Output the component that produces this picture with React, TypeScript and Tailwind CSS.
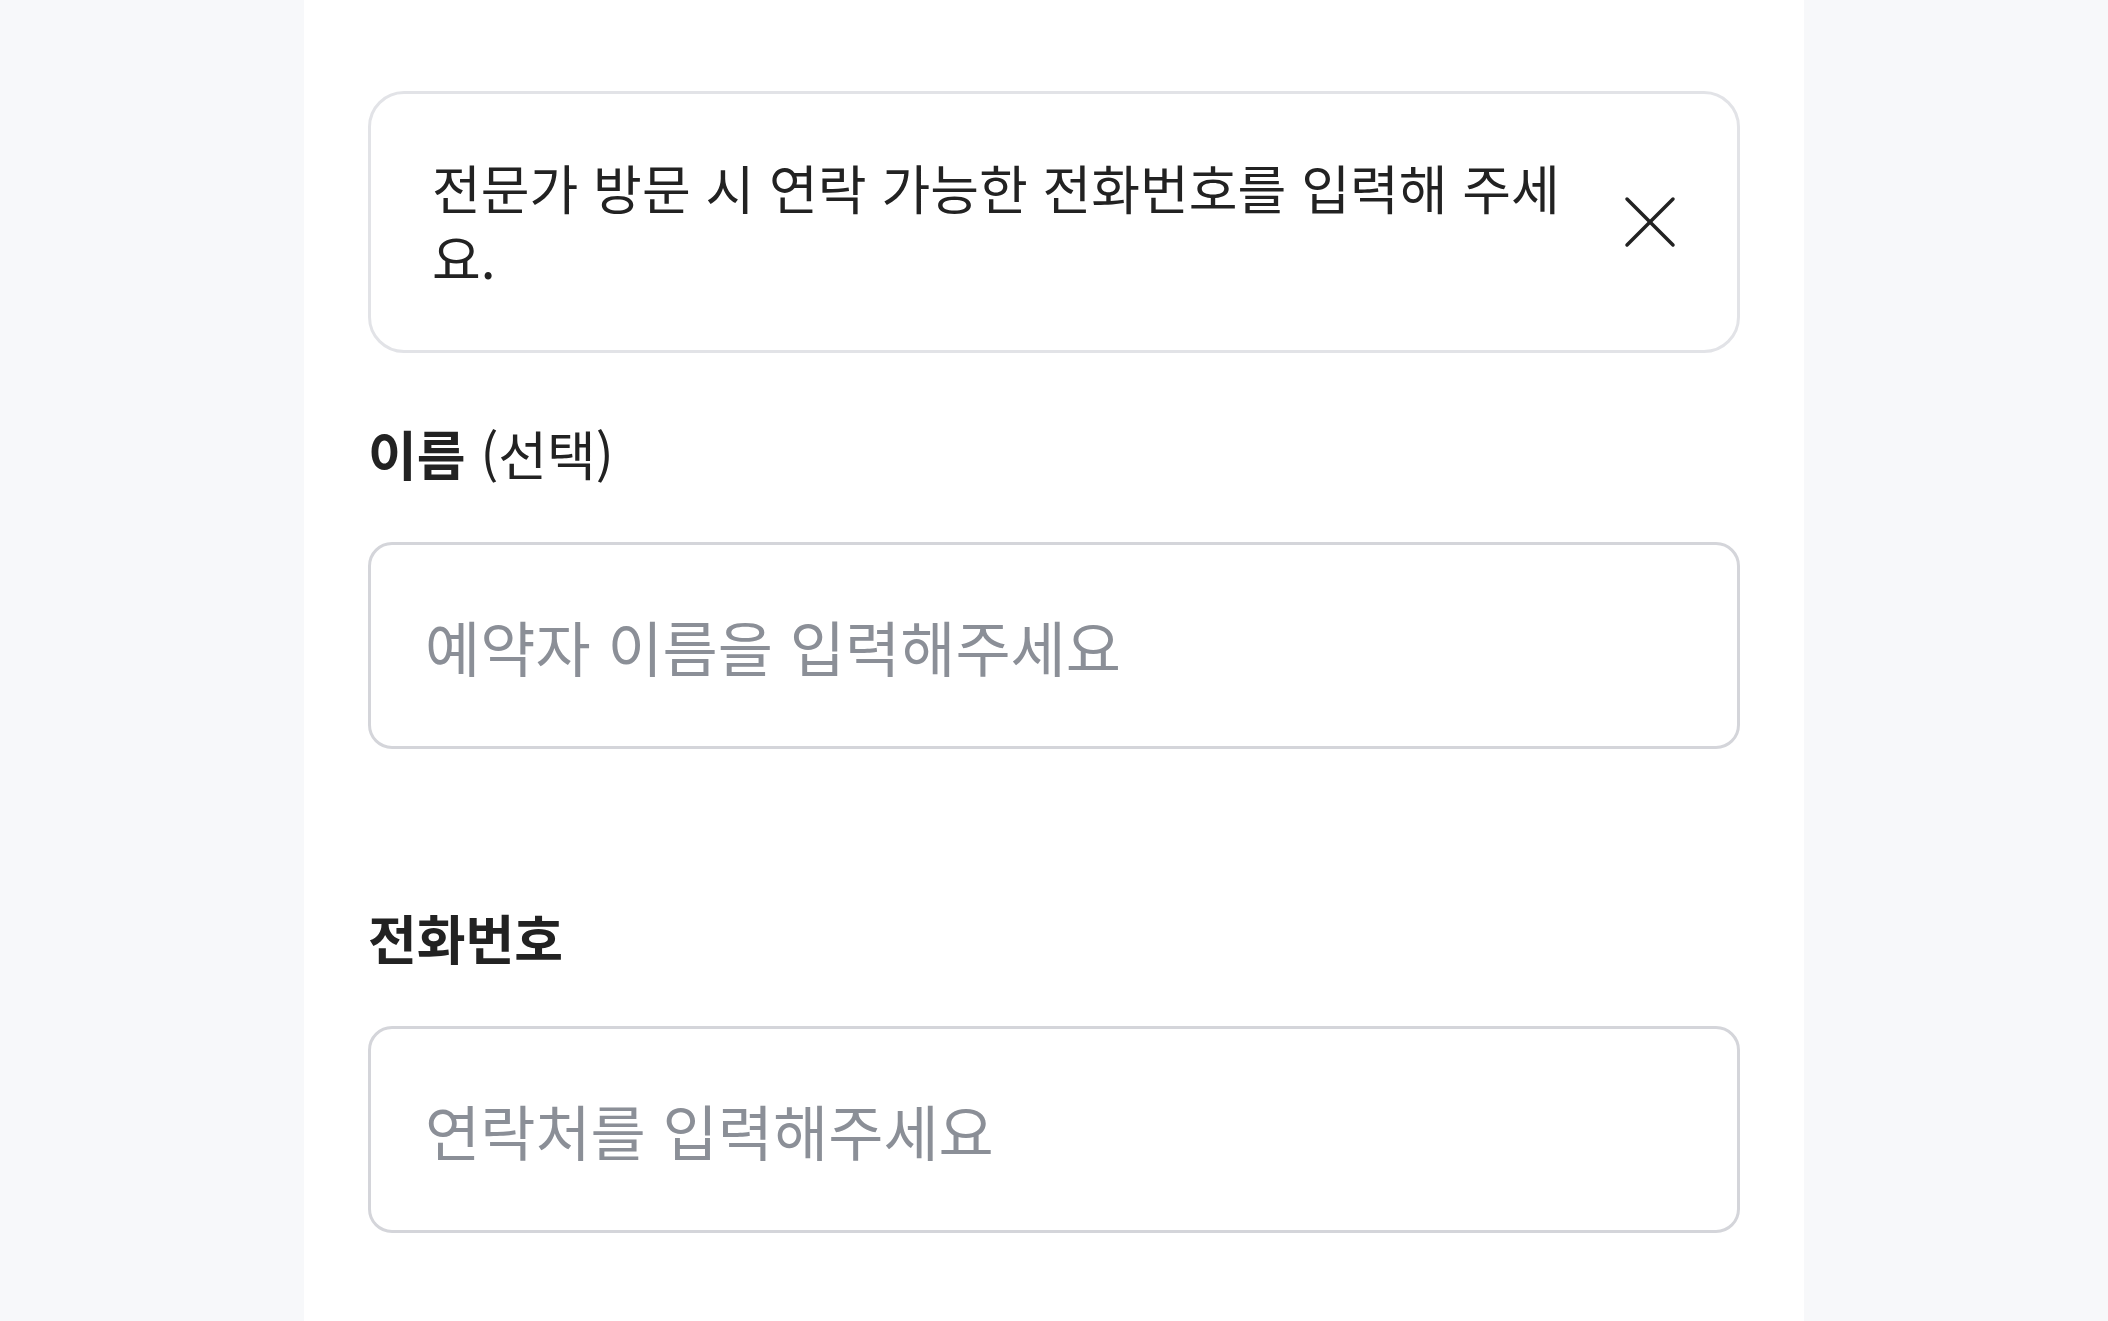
const font = "font-['Noto_Sans_CJK_KR','Noto_Sans',sans-serif]"

const Notice = () => {
  return (
    <div className="flex items-center gap-[52px] rounded-[36px] border-[3px] border-[#e2e3e7] bg-white pl-[61px] pr-[61px] py-[58px]">
      <p className="flex-1 text-[53px] leading-[70px] text-[#222222]">
        전문가 방문 시 연락 가능한 전화번호를 입력해 주세요.
      </p>
      <button className="shrink-0 text-[#222222]">
        <svg
          width="52"
          height="52"
          viewBox="0 0 52 52"
          fill="none"
          stroke="currentColor"
          strokeWidth="3.5"
          strokeLinecap="round"
        >
          <line x1="3" y1="3" x2="49" y2="49" />
          <line x1="49" y1="3" x2="3" y2="49" />
        </svg>
      </button>
    </div>
  )
}

const Field = ({
  label,
  optional,
  placeholder,
  type = 'text'
}: {
  label: string
  optional?: string
  placeholder: string
  type?: string
}) => {
  return (
    <div className="flex flex-col">
      <label className="text-[53px] leading-[72px] text-[#222222]">
        <span className="font-bold">{label}</span>
        {optional && <span className="font-normal"> {optional}</span>}
      </label>
      <input
        type={type}
        placeholder={placeholder}
        className="mt-[53px] h-[207px] w-full rounded-[24px] border-[3px] border-[#d4d5da] bg-white px-[54px] text-[60px] text-[#222222] outline-none placeholder:text-[#8b8f97]"
      />
    </div>
  )
}

export default function App() {
  return (
    <div className={`min-h-screen bg-[#f7f8fa] ${font}`} lang="ko">
      <div className="mx-auto min-h-screen w-[1500px] bg-white px-[64px] pt-[91px]">
        <Notice />
        <div className="mt-[64px]">
          <Field label="이름" optional="(선택)" placeholder="예약자 이름을 입력해주세요" />
        </div>
        <div className="mt-[152px]">
          <Field label="전화번호" placeholder="연락처를 입력해주세요" type="tel" />
        </div>
      </div>
    </div>
  )
}
